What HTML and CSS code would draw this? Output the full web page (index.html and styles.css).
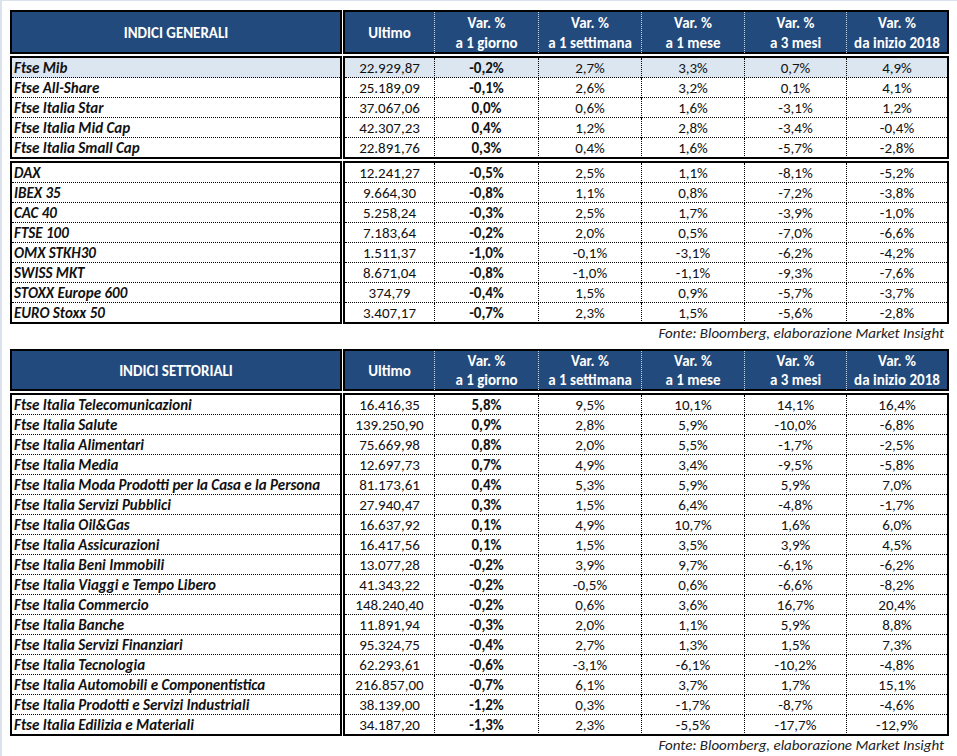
FILE: index.html
```html
<!DOCTYPE html>
<html lang="it">
<head>
<meta charset="utf-8">
<title>Indici</title>
<link rel="stylesheet" href="styles.css">
</head>
<body>
<div class="page">

<section class="tbl">
  <div class="band head">
    <div class="box namebox"><div class="hname">INDICI GENERALI</div></div>
    <div class="box databox hrow">
      <div class="hc">Ultimo</div>
      <div class="hc">Var. %<br>a 1 giorno</div>
      <div class="hc">Var. %<br>a 1 settimana</div>
      <div class="hc">Var. %<br>a 1 mese</div>
      <div class="hc">Var. %<br>a 3 mesi</div>
      <div class="hc">Var. %<br>da inizio 2018</div>
    </div>
  </div>

  <div class="band">
    <div class="box namebox">
      <div class="nr hl">Ftse Mib</div>
      <div class="nr">Ftse All-Share</div>
      <div class="nr">Ftse Italia Star</div>
      <div class="nr">Ftse Italia Mid Cap</div>
      <div class="nr">Ftse Italia Small Cap</div>
    </div>
    <div class="box databox">
      <div class="dr hl"><span>22.929,87</span><span>-0,2%</span><span>2,7%</span><span>3,3%</span><span>0,7%</span><span>4,9%</span></div>
      <div class="dr"><span>25.189,09</span><span>-0,1%</span><span>2,6%</span><span>3,2%</span><span>0,1%</span><span>4,1%</span></div>
      <div class="dr"><span>37.067,06</span><span>0,0%</span><span>0,6%</span><span>1,6%</span><span>-3,1%</span><span>1,2%</span></div>
      <div class="dr"><span>42.307,23</span><span>0,4%</span><span>1,2%</span><span>2,8%</span><span>-3,4%</span><span>-0,4%</span></div>
      <div class="dr"><span>22.891,76</span><span>0,3%</span><span>0,4%</span><span>1,6%</span><span>-5,7%</span><span>-2,8%</span></div>
    </div>
  </div>

  <div class="band">
    <div class="box namebox">
      <div class="nr">DAX</div>
      <div class="nr">IBEX 35</div>
      <div class="nr">CAC 40</div>
      <div class="nr">FTSE 100</div>
      <div class="nr">OMX STKH30</div>
      <div class="nr">SWISS MKT</div>
      <div class="nr">STOXX Europe 600</div>
      <div class="nr">EURO Stoxx 50</div>
    </div>
    <div class="box databox">
      <div class="dr"><span>12.241,27</span><span>-0,5%</span><span>2,5%</span><span>1,1%</span><span>-8,1%</span><span>-5,2%</span></div>
      <div class="dr"><span>9.664,30</span><span>-0,8%</span><span>1,1%</span><span>0,8%</span><span>-7,2%</span><span>-3,8%</span></div>
      <div class="dr"><span>5.258,24</span><span>-0,3%</span><span>2,5%</span><span>1,7%</span><span>-3,9%</span><span>-1,0%</span></div>
      <div class="dr"><span>7.183,64</span><span>-0,2%</span><span>2,0%</span><span>0,5%</span><span>-7,0%</span><span>-6,6%</span></div>
      <div class="dr"><span>1.511,37</span><span>-1,0%</span><span>-0,1%</span><span>-3,1%</span><span>-6,2%</span><span>-4,2%</span></div>
      <div class="dr"><span>8.671,04</span><span>-0,8%</span><span>-1,0%</span><span>-1,1%</span><span>-9,3%</span><span>-7,6%</span></div>
      <div class="dr"><span>374,79</span><span>-0,4%</span><span>1,5%</span><span>0,9%</span><span>-5,7%</span><span>-3,7%</span></div>
      <div class="dr"><span>3.407,17</span><span>-0,7%</span><span>2,3%</span><span>1,5%</span><span>-5,6%</span><span>-2,8%</span></div>
    </div>
  </div>
  <p class="fonte">Fonte: Bloomberg, elaborazione Market Insight</p>
</section>

<section class="tbl">
  <div class="band head head2">
    <div class="box namebox"><div class="hname">INDICI SETTORIALI</div></div>
    <div class="box databox hrow">
      <div class="hc">Ultimo</div>
      <div class="hc">Var. %<br>a 1 giorno</div>
      <div class="hc">Var. %<br>a 1 settimana</div>
      <div class="hc">Var. %<br>a 1 mese</div>
      <div class="hc">Var. %<br>a 3 mesi</div>
      <div class="hc">Var. %<br>da inizio 2018</div>
    </div>
  </div>

  <div class="band">
    <div class="box namebox">
      <div class="nr">Ftse Italia Telecomunicazioni</div>
      <div class="nr">Ftse Italia Salute</div>
      <div class="nr">Ftse Italia Alimentari</div>
      <div class="nr">Ftse Italia Media</div>
      <div class="nr">Ftse Italia Moda Prodotti per la Casa e la Persona</div>
      <div class="nr">Ftse Italia Servizi Pubblici</div>
      <div class="nr">Ftse Italia Oil&amp;Gas</div>
      <div class="nr">Ftse Italia Assicurazioni</div>
      <div class="nr">Ftse Italia Beni Immobili</div>
      <div class="nr">Ftse Italia Viaggi e Tempo Libero</div>
      <div class="nr">Ftse Italia Commercio</div>
      <div class="nr">Ftse Italia Banche</div>
      <div class="nr">Ftse Italia Servizi Finanziari</div>
      <div class="nr">Ftse Italia Tecnologia</div>
      <div class="nr">Ftse Italia Automobili e Componentistica</div>
      <div class="nr">Ftse Italia Prodotti e Servizi Industriali</div>
      <div class="nr">Ftse Italia Edilizia e Materiali</div>
    </div>
    <div class="box databox">
      <div class="dr"><span>16.416,35</span><span>5,8%</span><span>9,5%</span><span>10,1%</span><span>14,1%</span><span>16,4%</span></div>
      <div class="dr"><span>139.250,90</span><span>0,9%</span><span>2,8%</span><span>5,9%</span><span>-10,0%</span><span>-6,8%</span></div>
      <div class="dr"><span>75.669,98</span><span>0,8%</span><span>2,0%</span><span>5,5%</span><span>-1,7%</span><span>-2,5%</span></div>
      <div class="dr"><span>12.697,73</span><span>0,7%</span><span>4,9%</span><span>3,4%</span><span>-9,5%</span><span>-5,8%</span></div>
      <div class="dr"><span>81.173,61</span><span>0,4%</span><span>5,3%</span><span>5,9%</span><span>5,9%</span><span>7,0%</span></div>
      <div class="dr"><span>27.940,47</span><span>0,3%</span><span>1,5%</span><span>6,4%</span><span>-4,8%</span><span>-1,7%</span></div>
      <div class="dr"><span>16.637,92</span><span>0,1%</span><span>4,9%</span><span>10,7%</span><span>1,6%</span><span>6,0%</span></div>
      <div class="dr"><span>16.417,56</span><span>0,1%</span><span>1,5%</span><span>3,5%</span><span>3,9%</span><span>4,5%</span></div>
      <div class="dr"><span>13.077,28</span><span>-0,2%</span><span>3,9%</span><span>9,7%</span><span>-6,1%</span><span>-6,2%</span></div>
      <div class="dr"><span>41.343,22</span><span>-0,2%</span><span>-0,5%</span><span>0,6%</span><span>-6,6%</span><span>-8,2%</span></div>
      <div class="dr"><span>148.240,40</span><span>-0,2%</span><span>0,6%</span><span>3,6%</span><span>16,7%</span><span>20,4%</span></div>
      <div class="dr"><span>11.891,94</span><span>-0,3%</span><span>2,0%</span><span>1,1%</span><span>5,9%</span><span>8,8%</span></div>
      <div class="dr"><span>95.324,75</span><span>-0,4%</span><span>2,7%</span><span>1,3%</span><span>1,5%</span><span>7,3%</span></div>
      <div class="dr"><span>62.293,61</span><span>-0,6%</span><span>-3,1%</span><span>-6,1%</span><span>-10,2%</span><span>-4,8%</span></div>
      <div class="dr"><span>216.857,00</span><span>-0,7%</span><span>6,1%</span><span>3,7%</span><span>1,7%</span><span>15,1%</span></div>
      <div class="dr"><span>38.139,00</span><span>-1,2%</span><span>0,3%</span><span>-1,7%</span><span>-8,7%</span><span>-4,6%</span></div>
      <div class="dr"><span>34.187,20</span><span>-1,3%</span><span>2,3%</span><span>-5,5%</span><span>-17,7%</span><span>-12,9%</span></div>
    </div>
  </div>
  <p class="fonte">Fonte: Bloomberg, elaborazione Market Insight</p>
</section>

</div>
</body>
</html>
```

FILE: styles.css
```css
* { box-sizing: border-box; }

html, body {
  margin: 0;
  padding: 0;
  background: #ffffff;
}

body {
  font-family: "Carlito", "Calibri", "Lato", "Liberation Sans", sans-serif;
  font-size: 15px;
  color: #111111;
}

.page {
  width: 957px;
  height: 756px;
  border-top: 1px solid #dbe2ee;
  border-left: 2px solid #dbe2ee;
  padding: 9px 0 0 8px;
  overflow: hidden;
}

.tbl {
  width: 939px;
}

.band {
  display: flex;
  gap: 1px;
  margin-top: 2px;
}

.band.head {
  margin-top: 0;
}

.box {
  border: 2px solid #000000;
}

.namebox {
  width: 332px;
  display: flex;
  flex-direction: column;
}

.databox {
  width: 606px;
  display: flex;
  flex-direction: column;
}

/* header */
.head .box {
  background: #234a7c;
  color: #ffffff;
  font-weight: bold;
  height: 44px;
}

.head2 .box {
  height: 42px;
}

.hname {
  flex: 1;
  display: flex;
  align-items: center;
  justify-content: center;
  padding-top: 1px;
}

.hrow {
  display: grid;
  grid-template-columns: 89px 104px 103px 103px 102px 101px;
}

.hc {
  display: flex;
  align-items: center;
  justify-content: center;
  text-align: center;
  line-height: 20px;
  padding-top: 1px;
}

.head2 .hc {
  line-height: 19px;
}

.hc + .hc {
  border-left: 1px dotted #c9d3e0;
}

/* body rows */
.nr {
  height: 20px;
  line-height: 19px;
  padding-top: 1px;
  padding-left: 2px;
  border-bottom: 1px dotted #000000;
  font-weight: bold;
  font-style: italic;
  white-space: nowrap;
}

.dr {
  height: 20px;
  line-height: 19px;
  display: grid;
  grid-template-columns: 89px 104px 103px 103px 102px 101px;
  border-bottom: 1px dotted #000000;
}

.nr:last-child,
.dr:last-child {
  height: 19px;
  border-bottom: none;
}

.dr span {
  text-align: center;
  padding-top: 1px;
}

.dr span + span {
  border-left: 1px dotted #000000;
}

.dr span:nth-child(2) {
  font-weight: bold;
}

.hl {
  background: #dce6f1;
}

.fonte {
  margin: 0 0 7px 0;
  height: 18px;
  line-height: 18px;
  padding-right: 5px;
  text-align: right;
  font-style: italic;
  color: #222222;
}
```
